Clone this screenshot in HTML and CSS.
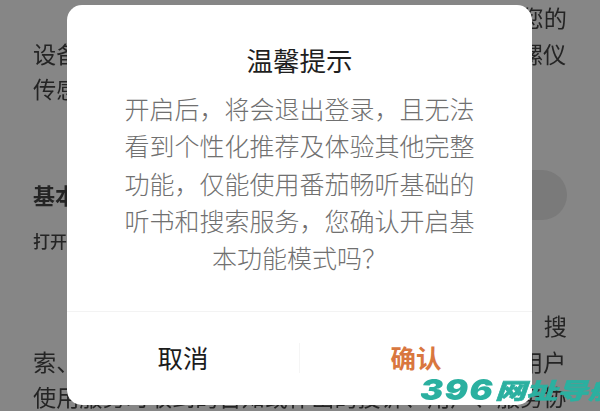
FILE: index.html
```html
<!DOCTYPE html>
<html lang="zh">
<head>
<meta charset="utf-8">
<title>温馨提示</title>
<link rel="stylesheet" href="styles.css">
</head>
<body>
<main class="page">
  <p class="line right">收集您的</p>
  <p class="line">设备信息，包括设备的加速度传感器、重力和陀螺仪</p>
  <p class="line">传感器信息等</p>
  <section class="basic">
    <div class="basic-text">
      <h2 class="basic-title">基本功能模式</h2>
      <p class="basic-note">打开后将退出登录</p>
    </div>
    <span class="toggle"></span>
  </section>
  <p class="line right">听书、搜</p>
  <p class="line">索、浏览等基本功能，同时我们将依法收集您的用户</p>
  <p class="line">使用服务时收到的告知或作出的投诉、用户、服务协</p>
</main>

<div class="dialog">
  <h1 class="dialog-title">温馨提示</h1>
  <p class="dialog-body">开启后，将会退出登录，且无法看到个性化推荐及体验其他完整功能，仅能使用番茄畅听基础的听书和搜索服务，您确认开启基本功能模式吗<span class="centered-mark">？</span></p>
  <div class="actions">
    <button class="action">取消</button>
    <span class="action-sep"></span>
    <button class="action confirm">确认</button>
  </div>
</div>

<div class="watermark"><span class="mark-num">396</span><span class="mark-text">网址导航</span></div>
</body>
</html>
```
FILE: styles.css
```css
html, body {
  margin: 0;
  height: 100%;
}
body {
  position: relative;
  width: 600px;
  height: 411px;
  overflow: hidden;
  background: #868686;
  font-family: "Noto Sans CJK SC", "Noto Sans", sans-serif;
  filter: blur(0.4px);
}
.page {
  padding: 0 33px;
  height: 411px;
  box-sizing: border-box;
  overflow: hidden;
  color: #242424;
  font-size: 23.2px;
  line-height: 34px;
}
.line {
  margin: 0;
  height: 35.5px;
  white-space: nowrap;
}
.line.right { text-align: right; }
.basic {
  display: flex;
  justify-content: space-between;
  margin-top: 63.5px;
  height: 138px;
}
.basic-title {
  margin: 9px 0 0;
  font-size: 22px;
  line-height: 30px;
  font-weight: 700;
}
.basic-note {
  margin: 20px 0 0;
  font-size: 17px;
  line-height: 24px;
  font-weight: 500;
}
.toggle {
  width: 100px;
  height: 50px;
  border-radius: 25px;
  background: #7a7a7a;
}
.dialog {
  position: absolute;
  left: 67px;
  top: 5px;
  width: 465px;
  height: 400px;
  box-sizing: border-box;
  border-radius: 15px;
  background: #fff;
  display: flex;
  flex-direction: column;
  align-items: center;
}
.dialog-title {
  margin: 35px 0 0;
  font-size: 26.5px;
  line-height: 40px;
  font-weight: 400;
  color: #1f1f1f;
}
.dialog-body {
  margin: 10px 0 0;
  width: 350px;
  font-size: 25px;
  line-height: 37.3px;
  font-weight: 300;
  text-align: center;
  color: #707070;
  flex: 1;
}
.centered-mark {
  font-family: "Noto Sans CJK TC", sans-serif;
}
.actions {
  align-self: stretch;
  display: flex;
  align-items: center;
  height: 92px;
  border-top: 1px solid #f3f3f3;
  padding-bottom: 1px;
}
.action {
  flex: 1;
  height: 90px;
  padding: 0 0 4px;
  border: 0;
  background: none;
  font: inherit;
  font-size: 25.5px;
  color: #1c1c1c;
}
.action-sep {
  width: 1px;
  height: 30px;
  background: #f5f5f5;
}
.action.confirm {
  color: #d9773f;
  font-weight: 700;
}
.watermark {
  position: absolute;
  left: 420px;
  right: 0;
  top: 370px;
  display: flex;
  overflow: hidden;
  white-space: nowrap;
  line-height: 40px;
  font-weight: 900;
  font-style: italic;
  color: #2bb0a0;
}
.mark-num {
  flex: none;
  width: 75px;
  font-family: "Inter", "Liberation Sans", sans-serif;
  font-size: 29px;
  letter-spacing: 1px;
  transform: scaleX(1.2);
  transform-origin: left center;
}
.mark-text {
  flex: none;
  font-size: 31px;
  -webkit-text-stroke: 0.7px #2bb0a0;
  transform: scaleY(0.72);
  transform-origin: left center;
}
```
